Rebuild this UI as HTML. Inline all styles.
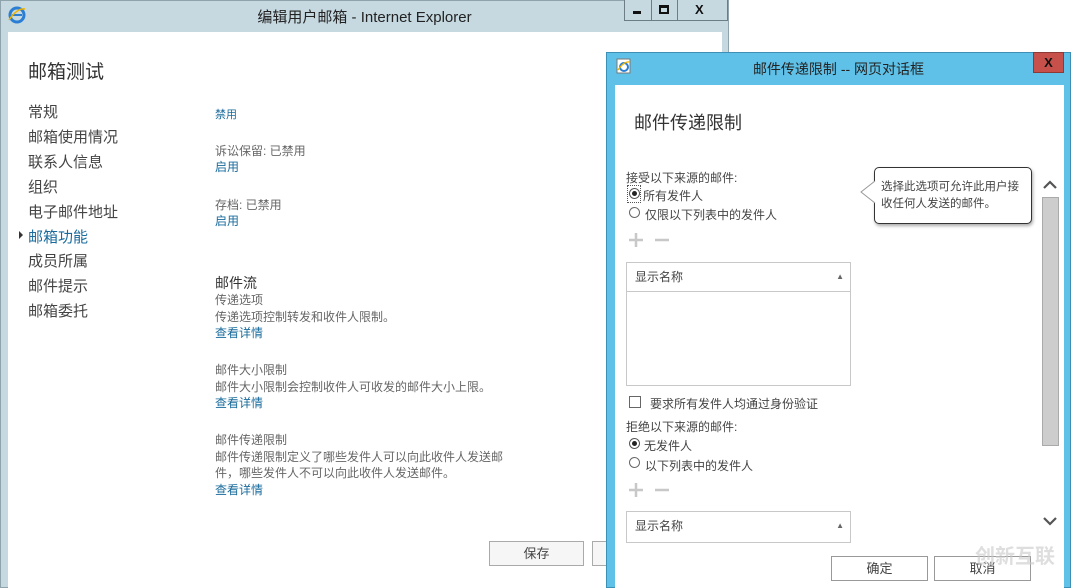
<!DOCTYPE html>
<html><head><meta charset="utf-8"><style>
*{margin:0;padding:0;box-sizing:border-box}
body{width:1071px;height:588px;position:relative;overflow:hidden;background:#fff;font-family:"Liberation Sans","Microsoft YaHei","Noto Sans CJK SC",sans-serif;color:#333}
.a{position:absolute;white-space:nowrap}
.lk{color:#1a6b9c}
.g{color:#666}
</style></head><body>
<!-- main window -->
<div class="a" style="left:0;top:0;width:729px;height:588px;background:#c6d9e1;border:1px solid #8fa3ad"></div>
<div class="a" style="left:8px;top:32px;width:714px;height:556px;background:#fff"></div>
<svg class="a" style="left:8px;top:6px" width="18" height="18" viewBox="0 0 18 18"><circle cx="9" cy="9" r="7" fill="none" stroke="#2a7fd4" stroke-width="3"/><rect x="4" y="8" width="10" height="2" fill="#2a7fd4"/><path d="M1 14 Q9 2 17 3" stroke="#f0b400" stroke-width="1.5" fill="none"/></svg>
<div class="a" style="left:0;width:729px;top:6px;text-align:center;font-size:15px;color:#222">编辑用户邮箱 - Internet Explorer</div>
<div class="a" style="left:624px;top:0;width:104px;height:21px;border:1px solid #6d7d85;border-top:none;background:#c6d9e1"></div>
<div class="a" style="left:651px;top:0;width:1px;height:21px;background:#6d7d85"></div>
<div class="a" style="left:677px;top:0;width:1px;height:21px;background:#6d7d85"></div>
<div class="a" style="left:633px;top:11px;width:8px;height:3px;background:#111"></div>
<div class="a" style="left:659px;top:5px;width:10px;height:9px;border:2px solid #111;border-top-width:3px"></div>
<div class="a" style="left:695px;top:2px;font-size:13px;font-weight:bold;color:#111">X</div>

<div class="a" style="left:28px;top:57px;font-size:19px;color:#333">邮箱测试</div>
<div class="a" style="left:28px;top:101px;font-size:15px;line-height:24.9px;color:#444">常规<br>邮箱使用情况<br>联系人信息<br>组织<br>电子邮件地址<br><span class="lk">邮箱功能</span><br>成员所属<br>邮件提示<br>邮箱委托</div>
<div class="a" style="left:19px;top:231px;width:0;height:0;border-left:4px solid #333;border-top:4px solid transparent;border-bottom:4px solid transparent"></div>

<div class="a lk" style="left:215px;top:106px;font-size:11px">禁用</div>
<div class="a" style="left:215px;top:143px;font-size:12px;line-height:16px"><span class="g">诉讼保留: 已禁用</span><br><span class="lk">启用</span></div>
<div class="a" style="left:215px;top:197px;font-size:12px;line-height:16px"><span class="g">存档: 已禁用</span><br><span class="lk">启用</span></div>
<div class="a" style="left:215px;top:273px;font-size:14px;color:#333">邮件流</div>
<div class="a" style="left:215px;top:292px;font-size:12px;line-height:16.5px"><span class="g">传递选项<br>传递选项控制转发和收件人限制。</span><br><span class="lk">查看详情</span></div>
<div class="a" style="left:215px;top:362px;font-size:12px;line-height:16.5px"><span class="g">邮件大小限制<br>邮件大小限制会控制收件人可收发的邮件大小上限。</span><br><span class="lk">查看详情</span></div>
<div class="a" style="left:215px;top:432px;font-size:12px;line-height:16.5px"><span class="g">邮件传递限制<br>邮件传递限制定义了哪些发件人可以向此收件人发送邮<br>件，哪些发件人不可以向此收件人发送邮件。</span><br><span class="lk">查看详情</span></div>
<div class="a" style="left:489px;top:541px;width:95px;height:25px;border:1px solid #aaa;background:#f6f6f6;text-align:center;font-size:13px;line-height:23px;color:#444">保存</div>
<div class="a" style="left:592px;top:541px;width:20px;height:25px;border:1px solid #aaa;background:#f6f6f6"></div>

<!-- dialog -->
<div class="a" style="left:606px;top:52px;width:465px;height:536px;background:#5fc1e8;border:1px solid #3e8fb5"></div>
<div class="a" style="left:615px;top:85px;width:449px;height:503px;background:#fff"></div>
<svg class="a" style="left:616px;top:58px" width="16" height="16" viewBox="0 0 16 16"><rect x="1" y="1" width="13" height="14" fill="#fff" stroke="#777"/><circle cx="8" cy="9" r="4" fill="none" stroke="#2a7fd4" stroke-width="2"/><path d="M2 12 Q8 3 14 4" stroke="#f0b400" stroke-width="1.3" fill="none"/></svg>
<div class="a" style="left:606px;width:465px;top:59px;text-align:center;font-size:14px;color:#222">邮件传递限制 -- 网页对话框</div>
<div class="a" style="left:1033px;top:52px;width:31px;height:21px;background:#c8504a;border:1px solid #8d3a36;color:#111;font-size:13px;font-weight:bold;text-align:center;line-height:19px">X</div>

<div class="a" style="left:634px;top:109px;font-size:18px;color:#333">邮件传递限制</div>
<div class="a" style="left:626px;top:169px;font-size:12px;color:#444">接受以下来源的邮件:</div>
<div class="a" style="left:627px;top:185px;width:14px;height:18px;border:1px dotted #555"></div>
<div class="a" style="left:629px;top:188px;width:11px;height:11px;border:1px solid #555;border-radius:50%"></div>
<div class="a" style="left:632px;top:191px;width:5px;height:5px;background:#222;border-radius:50%"></div>
<div class="a" style="left:643px;top:187px;font-size:12px;color:#444">所有发件人</div>
<div class="a" style="left:629px;top:207px;width:11px;height:11px;border:1px solid #666;border-radius:50%"></div>
<div class="a" style="left:645px;top:206px;font-size:12px;color:#444">仅限以下列表中的发件人</div>
<svg class="a" style="left:628px;top:232px" width="42" height="16"><path d="M8 1V15M1 8H15M27 8H41" stroke="#c8c8c8" stroke-width="2.5"/></svg>
<div class="a" style="left:626px;top:262px;width:225px;height:124px;border:1px solid #c8c8c8"></div>
<div class="a" style="left:626px;top:262px;width:225px;height:30px;border:1px solid #c8c8c8;font-size:12px;line-height:28px;padding-left:8px;color:#444">显示名称<span style="position:absolute;right:6px;font-size:8px;color:#666">▲</span></div>

<div class="a" style="left:874px;top:167px;width:158px;height:57px;border:1px solid #333;border-radius:5px;background:#fff;box-shadow:1px 2px 3px #aaa;font-size:11.5px;line-height:17px;padding:11px 0 0 6px;color:#444">选择此选项可允许此用户接<br>收任何人发送的邮件。</div>
<svg class="a" style="left:860px;top:180px" width="16" height="24"><path d="M15 1 L1 12 L15 23" fill="#fff" stroke="#999"/></svg>

<svg class="a" style="left:1043px;top:180px" width="14" height="10"><path d="M1 8L7 2L13 8" stroke="#555" stroke-width="2.2" fill="none"/></svg>
<div class="a" style="left:1042px;top:197px;width:17px;height:249px;background:#cdcdcd;border:1px solid #aaa"></div>
<svg class="a" style="left:1043px;top:516px" width="14" height="10"><path d="M1 2L7 8L13 2" stroke="#555" stroke-width="2.2" fill="none"/></svg>

<div class="a" style="left:629px;top:396px;width:12px;height:12px;border:1px solid #666"></div>
<div class="a" style="left:650px;top:395px;font-size:12px;color:#444">要求所有发件人均通过身份验证</div>
<div class="a" style="left:626px;top:418px;font-size:12px;color:#444">拒绝以下来源的邮件:</div>
<div class="a" style="left:629px;top:438px;width:11px;height:11px;border:1px solid #555;border-radius:50%"></div>
<div class="a" style="left:632px;top:441px;width:5px;height:5px;background:#222;border-radius:50%"></div>
<div class="a" style="left:644px;top:437px;font-size:12px;color:#444">无发件人</div>
<div class="a" style="left:629px;top:457px;width:11px;height:11px;border:1px solid #666;border-radius:50%"></div>
<div class="a" style="left:645px;top:457px;font-size:12px;color:#444">以下列表中的发件人</div>
<svg class="a" style="left:628px;top:482px" width="42" height="16"><path d="M8 1V15M1 8H15M27 8H41" stroke="#c8c8c8" stroke-width="2.5"/></svg>
<div class="a" style="left:626px;top:511px;width:225px;height:32px;border:1px solid #c8c8c8;font-size:12px;line-height:28px;padding-left:8px;color:#444">显示名称<span style="position:absolute;right:6px;font-size:8px;color:#666">▲</span></div>

<div class="a" style="left:831px;top:556px;width:97px;height:25px;border:1px solid #999;background:#fff;text-align:center;font-size:13px;line-height:23px;color:#444">确定</div>
<div class="a" style="left:934px;top:556px;width:97px;height:25px;border:1px solid #999;background:#fff;text-align:center;font-size:13px;line-height:23px;color:#444">取消</div>
<div class="a" style="left:975px;top:540px;font-size:20px;color:rgba(200,200,200,0.6);font-weight:bold">创新互联</div>
</body></html>
